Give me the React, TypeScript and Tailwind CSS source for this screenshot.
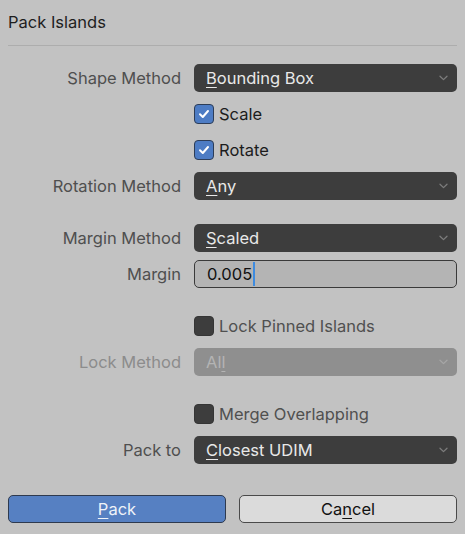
import React from 'react';

const FONT = "font-['Inter','Noto_Sans',sans-serif]";

function Chevron({ color = '#7c7c7c' }: { color?: string }) {
  return (
    <svg width="9" height="6" viewBox="0 0 9 6" className="shrink-0">
      <path d="M1 1.2 L4.5 4.6 L8 1.2" fill="none" stroke={color} strokeWidth="1.3" strokeLinecap="round" strokeLinejoin="round" />
    </svg>
  );
}

// Text with one underlined mnemonic letter, Blender style
function Mnemonic({ text, at }: { text: string; at: number }) {
  return (
    <span>
      {text.slice(0, at)}
      <span className="underline underline-offset-[3px] decoration-1">{text[at]}</span>
      {text.slice(at + 1)}
    </span>
  );
}

function Row({ label, disabled, children }: { label?: string; disabled?: boolean; children: React.ReactNode }) {
  return (
    <div className="flex h-7 items-center gap-[13px]">
      <div className={`w-[173px] shrink-0 text-right text-[16.5px] ${disabled ? 'text-[#8c8c8c]' : 'text-[#4f4f4f]'}`}>
        {label}
      </div>
      <div className="flex-1">{children}</div>
    </div>
  );
}

function Dropdown({ text, at, disabled }: { text: string; at: number; disabled?: boolean }) {
  return (
    <div
      className={`flex h-7 items-center justify-between rounded-[5px] pl-3 pr-[9px] text-[16.5px] ${
        disabled ? 'bg-[#8f8f8f] text-[#b4b4b4]' : 'bg-[#3d3d3d] text-[#e8e8e8]'
      }`}
    >
      <Mnemonic text={text} at={at} />
      <Chevron color={disabled ? '#a6a6a6' : '#7c7c7c'} />
    </div>
  );
}

function Check({ label, checked, muted }: { label: string; checked?: boolean; muted?: boolean }) {
  return (
    <div className="flex items-center gap-[5px]">
      <div
        className={`flex h-5 w-5 items-center justify-center rounded-[4px] border ${
          checked ? 'border-[#2d3d57] bg-[#4d7cc4]' : 'border-[#353535] bg-[#3d3d3d]'
        }`}
      >
        {checked && (
          <svg width="14" height="14" viewBox="0 0 14 14">
            <path d="M3 7.3 L5.8 10 L11 4" fill="none" stroke="#ffffff" strokeWidth="2" strokeLinecap="round" strokeLinejoin="round" />
          </svg>
        )}
      </div>
      <span className={`text-[16.5px] ${muted ? 'text-[#505050]' : 'text-[#1c1c1c]'}`}>{label}</span>
    </div>
  );
}

export default function App() {
  return (
    <div className={`h-[534px] w-[465px] bg-[#c2c2c2] px-2 ${FONT}`}>
      <div className="pt-[11px] text-[16.5px] leading-[22px] text-[#1e1e1e]">Pack Islands</div>
      <div className="mt-3 h-px bg-[#adadad]" />

      <div className="mt-[18px] flex flex-col gap-2">
        <Row label="Shape Method">
          <Dropdown text="Bounding Box" at={0} />
        </Row>
        <Row>
          <Check label="Scale" checked />
        </Row>
        <Row>
          <Check label="Rotate" checked />
        </Row>
        <Row label="Rotation Method">
          <Dropdown text="Any" at={0} />
        </Row>
      </div>

      <div className="mt-6 flex flex-col gap-2">
        <Row label="Margin Method">
          <Dropdown text="Scaled" at={0} />
        </Row>
        <Row label="Margin">
          <div className="flex h-7 items-center rounded-[5px] border border-[#3a3a3a] bg-[#b4b4b4] pl-3 text-[16.5px] text-[#111]">
            <span>0.005</span>
            <span className="ml-px h-[24px] w-[2px] bg-[#3d8be0]" />
          </div>
        </Row>
      </div>

      <div className="mt-6 flex flex-col gap-2">
        <Row>
          <Check label="Lock Pinned Islands" muted />
        </Row>
        <Row label="Lock Method" disabled>
          <Dropdown text="All" at={2} disabled />
        </Row>
      </div>

      <div className="mt-6 flex flex-col gap-2">
        <Row>
          <Check label="Merge Overlapping" muted />
        </Row>
        <Row label="Pack to">
          <Dropdown text="Closest UDIM" at={0} />
        </Row>
      </div>

      <div className="mt-[31px] grid grid-cols-2 gap-[13px]">
        <button className="h-7 rounded-[5px] border border-[#2e3a4f] bg-[#5680c2] text-[16.5px] text-[#eef2f8]">
          <Mnemonic text="Pack" at={0} />
        </button>
        <button className="h-7 rounded-[5px] border border-[#4a4a4a] bg-[#dbdbdb] text-[16.5px] text-[#111]">
          <Mnemonic text="Cancel" at={2} />
        </button>
      </div>
    </div>
  );
}
